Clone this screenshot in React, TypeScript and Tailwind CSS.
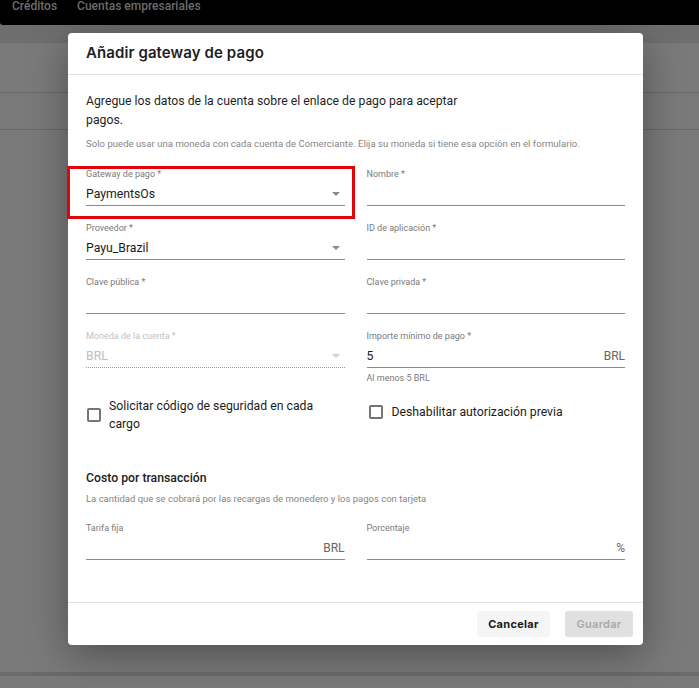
import { ReactNode } from 'react';

const body = { fontFamily: 'Roboto, "Liberation Sans", sans-serif' };
const heading = { fontFamily: 'Inter, "Liberation Sans", sans-serif' };

const Caret = ({ disabled }: { disabled?: boolean }) => (
    <svg width="8" height="4" viewBox="0 0 8 4" className={disabled ? 'text-[#cfcfcf]' : 'text-[#8a8a8a]'}>
        <path d="M0 0 L8 0 L4 4 Z" fill="currentColor" />
    </svg>
);

interface FieldProps {
    label: string;
    value?: string;
    suffix?: ReactNode;
    select?: boolean;
    disabled?: boolean;
    helper?: string;
}

const Field = ({ label, value, suffix, select, disabled, helper }: FieldProps) => (
    <div className="mb-[16px]">
        <div className={`text-[9px] leading-[12px] ${disabled ? 'text-[#c2c2c2]' : 'text-[#7a7a7a]'}`}>{label}</div>
        <div
            className={`h-[26px] pt-[3px] flex items-center justify-between border-b ${disabled ? 'border-dotted border-[#9a9a9a]' : 'border-[#8a8a8a]'}`}
        >
            <span className={`text-[12.25px] ${disabled ? 'text-[#bdbdbd]' : 'text-[#1c1c1c]'}`}>{value}</span>
            {select && <span className="pr-[5px] flex"><Caret disabled={disabled} /></span>}
            {suffix && <span className="text-[12px] text-[#666]">{suffix}</span>}
        </div>
        {helper && <div className="mt-[4px] text-[9px] leading-[12px] text-[#7a7a7a]">{helper}</div>}
    </div>
);

const Checkbox = ({ children, gap }: { children: ReactNode; gap: string }) => (
    <div className={`flex items-center ${gap}`}>
        <div className="w-[14px] h-[14px] shrink-0 border-2 border-[#757575] rounded-[2px]" />
        <span className="text-[12.25px] leading-[18px] text-[#1c1c1c] max-w-[215px]">{children}</span>
    </div>
);

export default function App() {
    return (
        <div className="relative w-[699px] h-[688px] overflow-hidden bg-[#7a7a7a]" style={body}>
            {/* app behind the overlay */}
            <div className="h-[25px] bg-black rounded-bl-[3px] flex gap-[20px] px-[12px] text-[12px] font-medium text-[#6e6e6e] leading-[12px]">
                <span>Créditos</span>
                <span>Cuentas empresariales</span>
            </div>
            <div className="h-[18px] bg-[#6e6e6e]" />
            <div className="h-[50px] border-b border-[#686868]" />
            <div className="h-[37px] border-b border-[#686868]" />
            <div className="h-[542px]" />
            <div className="h-[4px] bg-[#6a6a6a]" />

            {/* dialog */}
            <div className="absolute left-[68px] top-[33px] w-[575px] h-[612px] bg-white rounded-[4px] shadow-[0_10px_40px_rgba(0,0,0,0.35)] flex flex-col">
                <div className="h-[42px] shrink-0 flex items-center px-[18px] border-b border-[#e2e2e2]">
                    <h2 className="text-[15px] font-semibold text-[#1e1e1e] tracking-[0.1px]" style={heading}>
                        Añadir gateway de pago
                    </h2>
                </div>

                <div className="flex-1 px-[18px] pt-[17px]">
                    <p className="text-[12.25px] leading-[19px] text-[#1f1f1f] max-w-[390px]">
                        Agregue los datos de la cuenta sobre el enlace de pago para aceptar pagos.
                    </p>
                    <p className="mt-[7px] text-[9.5px] leading-[14px] text-[#858585] tracking-[0.05px]">
                        Solo puede usar una moneda con cada cuenta de Comerciante. Elija su moneda si tiene esa opción en el formulario.
                    </p>

                    <div className="mt-[17px] grid grid-cols-2 gap-x-[22px]">
                        <div className="relative">
                            <div className="absolute -left-[19px] -right-[10px] -top-[2px] h-[53px] border-[3px] border-[#e0050b] pointer-events-none" />
                            <Field label="Gateway de pago *" value="PaymentsOs" select />
                        </div>
                        <Field label="Nombre *" />
                        <Field label="Proveedor *" value="Payu_Brazil" select />
                        <Field label="ID de aplicación *" />
                        <Field label="Clave pública *" />
                        <Field label="Clave privada *" />
                        <Field label="Moneda de la cuenta *" value="BRL" select disabled />
                        <Field label="Importe mínimo de pago *" value="5" suffix="BRL" helper="Al menos 5 BRL" />
                    </div>

                    <div className="-mt-[3px] grid grid-cols-2 gap-x-[22px] items-start">
                        <div className="pl-[1px]">
                            <Checkbox gap="gap-[8px]">Solicitar código de seguridad en cada cargo</Checkbox>
                        </div>
                        <div className="pt-[6px] pl-[2px]">
                            <Checkbox gap="gap-[9px]">Deshabilitar autorización previa</Checkbox>
                        </div>
                    </div>

                    <h3 className="mt-[36px] text-[12.25px] leading-[18px] font-medium text-[#1c1c1c]">Costo por transacción</h3>
                    <p className="mt-[5px] text-[9.5px] leading-[14px] text-[#858585]">
                        La cantidad que se cobrará por las recargas de monedero y los pagos con tarjeta
                    </p>
                    <div className="mt-[16px] grid grid-cols-2 gap-x-[22px]">
                        <Field label="Tarifa fija" suffix="BRL" />
                        <Field label="Porcentaje" suffix="%" />
                    </div>
                </div>

                <div className="h-[43px] shrink-0 border-t border-[#e2e2e2] flex items-center justify-end gap-[15px] pr-[10px]" style={heading}>
                    <button className="h-[26px] w-[73px] rounded-[3px] bg-[#f5f5f5] text-[11px] font-bold text-[#1a1a1a] tracking-[0.3px]">
                        Cancelar
                    </button>
                    <button className="h-[26px] w-[68px] rounded-[3px] bg-[#e0e0e0] text-[11px] font-semibold text-[#a8a8a8] tracking-[0.3px]">
                        Guardar
                    </button>
                </div>
            </div>
        </div>
    );
}
